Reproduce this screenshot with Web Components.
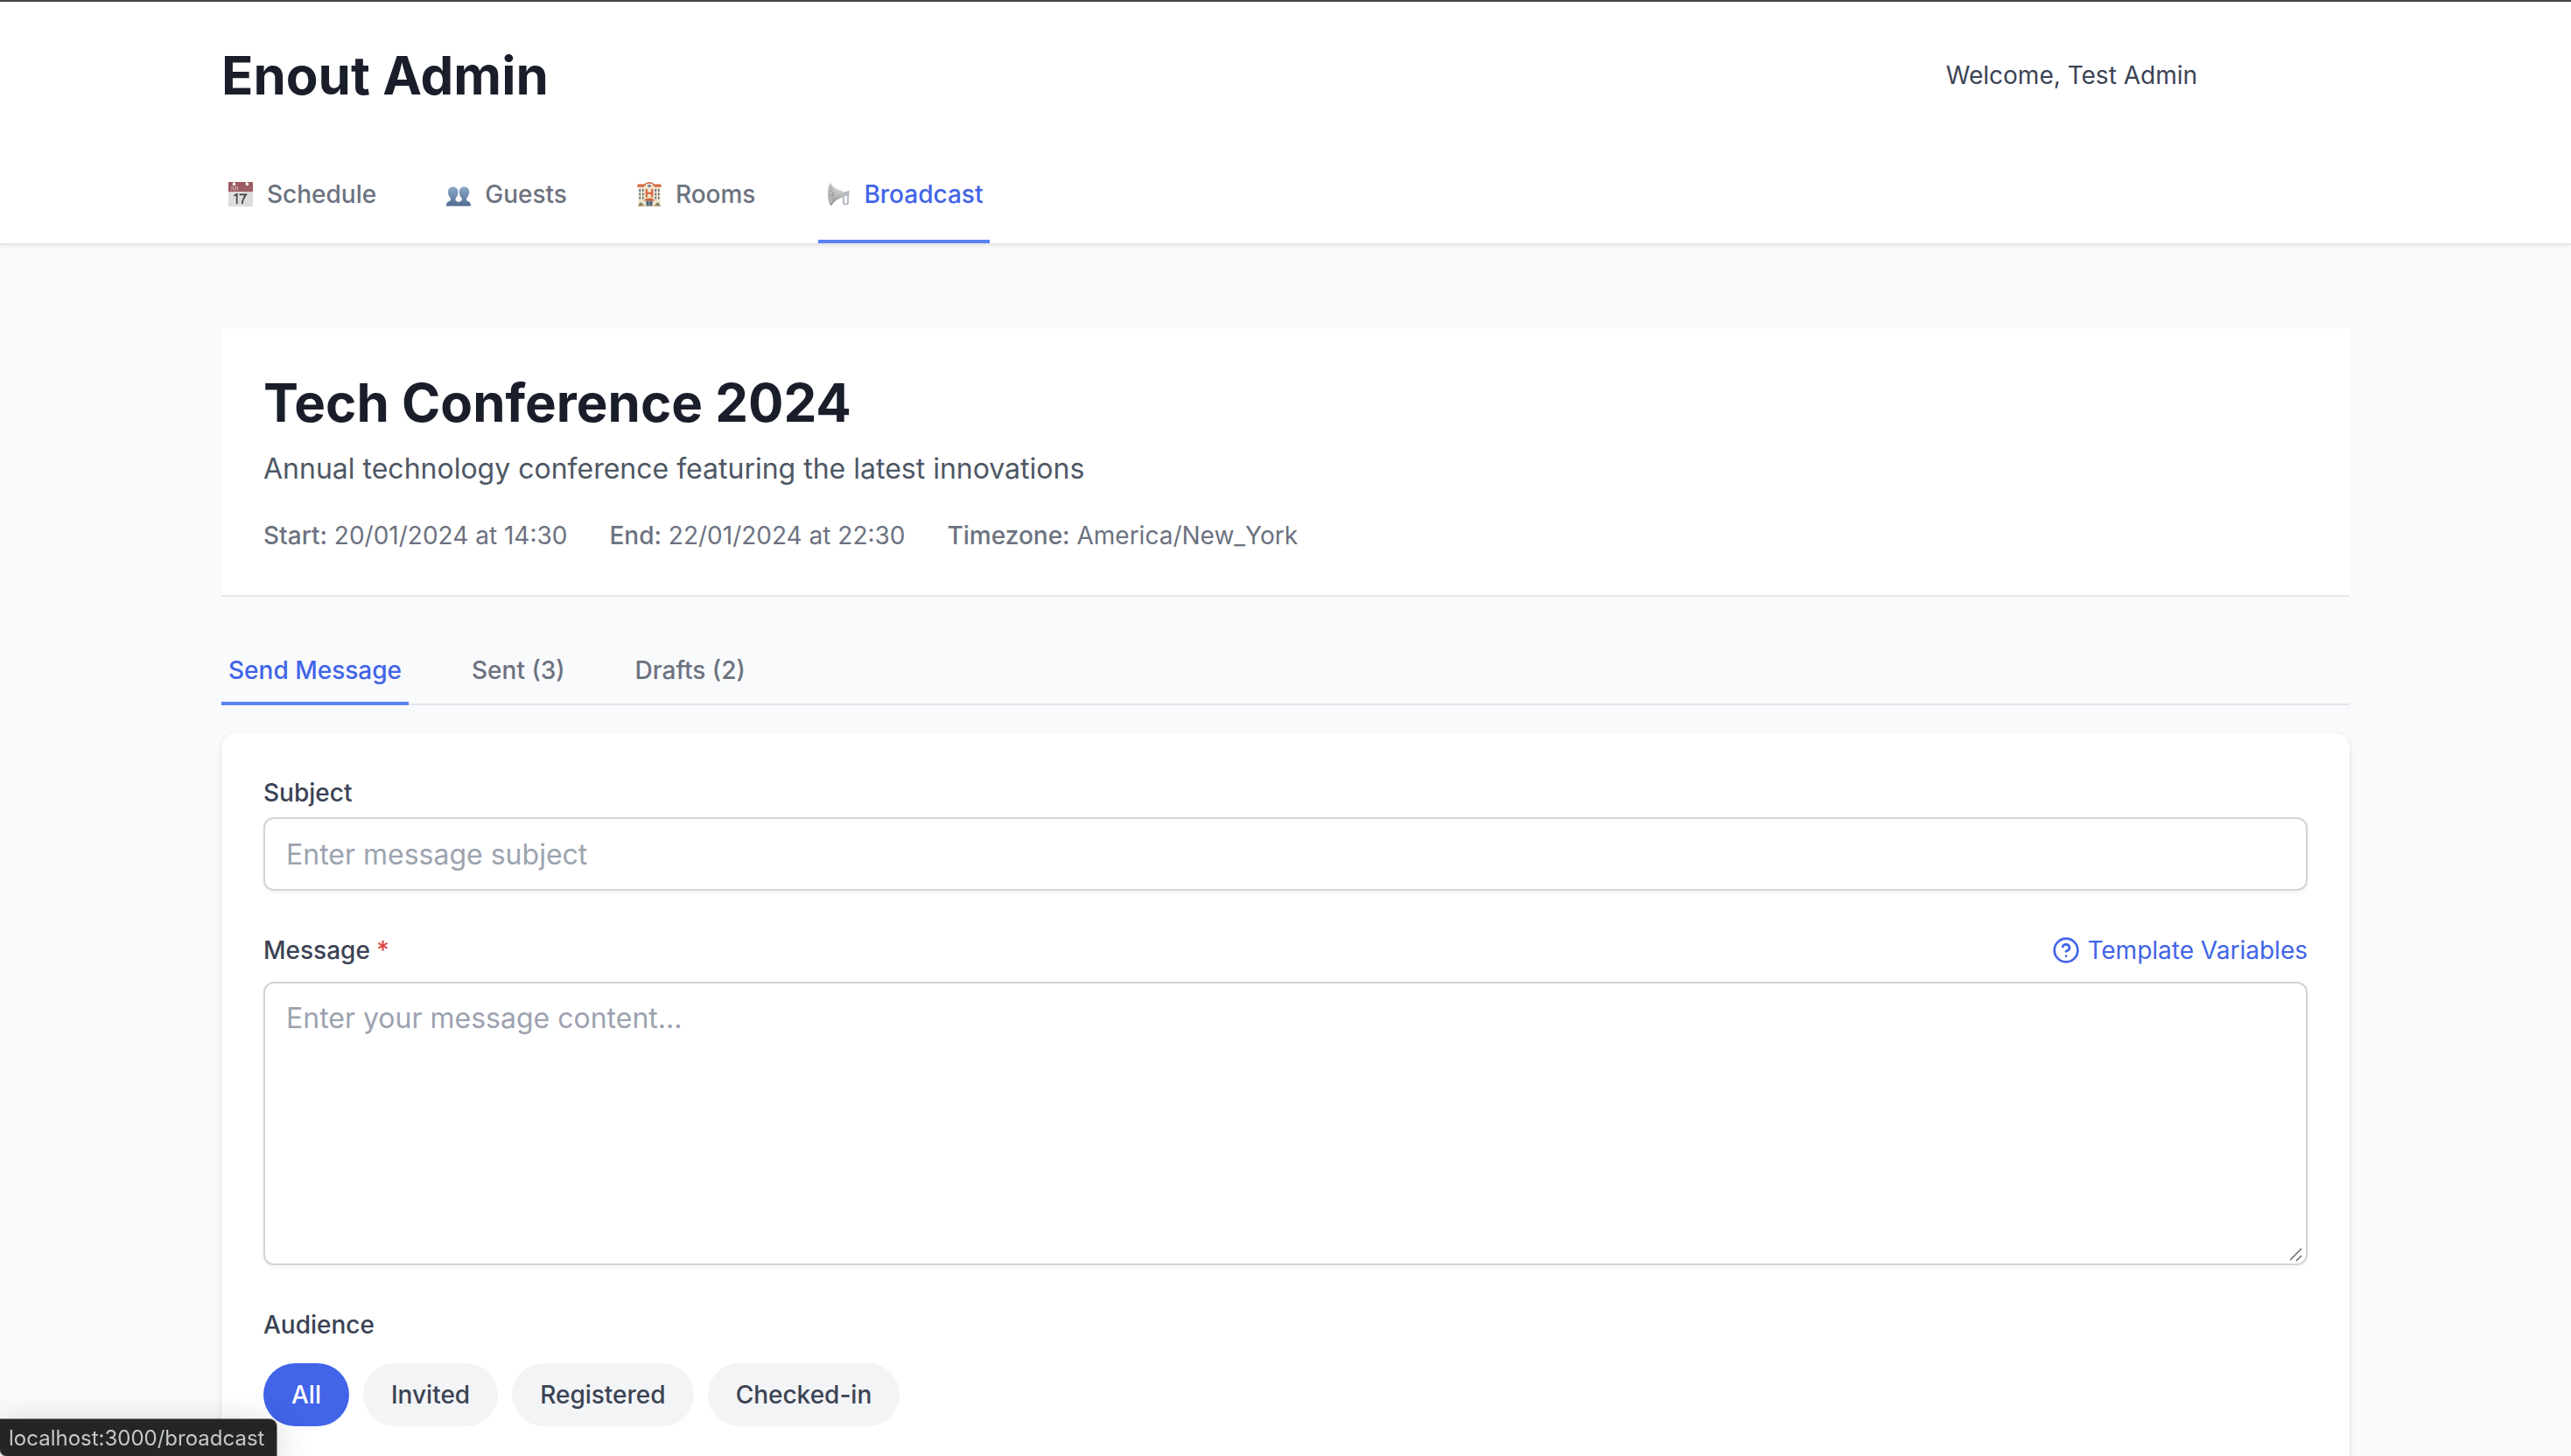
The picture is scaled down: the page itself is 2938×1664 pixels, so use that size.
<!DOCTYPE html>
<html lang="en">
<head>
<meta charset="utf-8">
<title>Enout Admin</title>
<style>
  :root {
    --ink: #1a1e2b;
    --text: #3b4354;
    --muted: #6c7280;
    --line: #e3e6ea;
    --field-line: #d1d5db;
    --blue: #4164e8;
    --blue-line: #5982f4;
    --page: #f9fafc;
  }
  * { box-sizing: border-box; }
  body {
    margin: 0;
    height: 100vh;
    overflow: hidden;
    background: var(--page);
    color: var(--text);
    font: 400 28px/40px Inter, "Liberation Sans", sans-serif;
    font-optical-sizing: none;
    -webkit-font-smoothing: antialiased;
  }
</style>
</head>
<body>
<admin-app></admin-app>

<template id="t-app">
  <style>
    :host { display: block; border-top: 2px solid #464547; }
    main { display: block; box-sizing: border-box; max-width: 2560px; margin: 0 auto; padding: 96px 64px; }
    page-tabs { margin-top: 48px; }
    message-form { margin-top: 32px; }
  </style>
  <admin-header>
    <span slot="brand">Enout Admin</span>
    <span slot="user">Welcome, Test Admin</span>
    <nav-link href="#schedule" icon="calendar">Schedule</nav-link>
    <nav-link href="#guests" icon="guests">Guests</nav-link>
    <nav-link href="#rooms" icon="hotel">Rooms</nav-link>
    <nav-link href="#broadcast" icon="horn" active>Broadcast</nav-link>
  </admin-header>
  <main>
    <event-card>
      <span slot="title">Tech Conference 2024</span>
      <span slot="about">Annual technology conference featuring the latest innovations</span>
      <event-fact label="Start:">20/01/2024 at 14:30</event-fact>
      <event-fact label="End:">22/01/2024 at 22:30</event-fact>
      <event-fact label="Timezone:">America/New_York</event-fact>
    </event-card>
    <page-tabs>
      <tab-button active>Send Message</tab-button>
      <tab-button>Sent (3)</tab-button>
      <tab-button>Drafts (2)</tab-button>
    </page-tabs>
    <message-form></message-form>
  </main>
  <status-bubble>localhost:3000/broadcast</status-bubble>
</template>

<template id="t-header">
  <style>
    :host { display: block; position: relative; background: #fff; border-bottom: 2px solid var(--line); box-shadow: 0 2px 4px rgba(0,0,0,.05); }
    .inner { box-sizing: border-box; max-width: 2560px; margin: 0 auto; padding: 0 64px; }
    .top { display: flex; align-items: center; justify-content: space-between; padding: 48px 174px 48px 0; }
    h1 { margin: 0; font-size: 60px; line-height: 72px; font-weight: 700; color: var(--ink); }
    nav { display: flex; gap: 64px; }
  </style>
  <div class="inner">
    <div class="top"><h1><slot name="brand"></slot></h1><slot name="user"></slot></div>
    <nav><slot></slot></nav>
  </div>
</template>

<template id="t-nav-link">
  <style>
    :host { display: block; }
    a { display: flex; align-items: center; gap: 16px; padding: 32px 8px; border-bottom: 4px solid transparent; font-weight: 500; color: var(--muted); text-decoration: none; }
    :host([active]) a { color: var(--blue); border-color: var(--blue-line); }
    svg { display: block; width: 28px; height: 28px; }
  </style>
  <a><span class="icon"></span><slot></slot></a>
</template>

<template id="i-calendar">
  <svg viewBox="0 0 28 28" aria-hidden="true">
    <path fill="#dcdcdc" d="M0 10h28v18H0z"/>
    <path fill="#9c5b60" d="M0 0h28v11H0z"/>
    <path fill="none" stroke="#d3b2b5" stroke-width="1" d="M4 5v3.500q0 1-1.500 1M6 5v3q0 1.500 1.200 1.500T8.500 8V5M10.500 5v4.500"/>
    <path fill="none" stroke="#a56a6f" stroke-dasharray="1 1" d="M15 6.500h11M15 8.500h11"/>
    <circle cx="6.500" cy="2.500" r="1.700" fill="#fff"/><circle cx="21.500" cy="2.500" r="1.700" fill="#fff"/>
    <path stroke="#fff" stroke-width="1.500" d="M6.500 0v2M20 0l1.500 2"/>
    <path fill="none" stroke="#404040" stroke-width="1.700" d="M6.500 15.800l3.200-1.900V25M12.500 14.300h7.700q-4 5-4.500 10.700"/>
  </svg>
</template>

<template id="i-guests">
  <svg viewBox="0 0 28 28" aria-hidden="true">
    <defs><linearGradient id="g" x1="0" y1="0" x2="0" y2="1"><stop offset="0" stop-color="#8ba9c8"/><stop offset="1" stop-color="#526c94"/></linearGradient></defs>
    <path fill="url(#g)" d="M7.500 5.500C4 5.500 2 8 2 11.500c0 3 1 5 2.500 6.500.8 1 .6 2.600 0 3.300C3 22.600 0 22 0 27.500h28c0-5.500-3-4.900-4.500-6.200-.6-.7-.8-2.300 0-3.300 1.500-1.500 2.700-3.500 2.700-6.500 0-3.500-2-6-5.700-6-3.500 0-5.700 2.500-5.700 6 0 3 1 5 2.500 6.500.8 1 .6 2.600 0 3.300-.8.800-2 1-3.300 1.800-1.200-.8-2.300-1-3-1.800-.6-.7-.8-2.300 0-3.300 1.500-1.500 2.500-3.500 2.500-6.500 0-3.500-2.500-6-6-6z"/>
  </svg>
</template>

<template id="i-hotel">
  <svg viewBox="0 0 28 28" aria-hidden="true">
    <path fill="#efe2c8" d="M1.500 6H9V4q5-5 10 0v2h7.500v21.500h-25z"/>
    <path fill="none" stroke="#d4693f" stroke-width="1.400" d="M8.500 5q.5-4 5.500-4.200 5 .2 5.500 4.200"/>
    <path fill="#d4693f" d="M1 2.500h7.500L8 5.800H0zM19.500 2.500H27l1 3.300h-8z"/>
    <circle cx="14" cy="4.500" r="1.600" fill="#5d7896"/>
    <path fill="#4f6885" d="M2.500 8H4v3H2.500zM6 8h1.500v3H6zM2.500 12.500H4v3H2.500zm3.500 0h1.500v3H6zM2.500 17H4v2.500H2.500zM6 17h1.500v2.500H6zM20.500 8H22v3h-1.500zM24 8h1.500v3H24zM20.500 12.500H22v3h-1.500zm3.500 0h1.500v3H24zM20.500 17H22v2.500h-1.500zm3.500 0h1.500v2.500H24z"/>
    <path fill="none" stroke="#d85f38" stroke-width="2" d="M10.800 8v9.500M17.200 8v9.500M10.800 12.700h6.400"/>
    <path fill="#cf6038" d="M8 21.500q1-3 6-3t6 3z"/>
    <path fill="#4c6079" d="M10.500 21.500h7v6h-7z"/><path stroke="#dccfb8" stroke-width=".8" d="M14 21.500v6"/>
    <path fill="#74885f" d="M2 27q.3-3.500 2.500-3.500T7 27zM21 27q.3-3.500 2.500-3.500T26 27z"/>
    <path fill="#b98e70" d="M1 26.500h8v1.300H1zm18 0h8v1.300h-8z"/>
  </svg>
</template>

<template id="i-horn">
  <svg viewBox="0 0 28 28" aria-hidden="true">
    <defs><linearGradient id="h" x1="0" y1="0" x2="0" y2="1"><stop offset="0" stop-color="#d2d2d2"/><stop offset=".45" stop-color="#c4c4c4"/><stop offset="1" stop-color="#8a8a8a"/></linearGradient></defs>
    <path fill="none" stroke="#a4abb5" stroke-width="1.600" d="M21 17v7.500q2.500 2 5 0V12"/>
    <path fill="#b4bac2" d="M20 12l5.500-1.500L27.500 9.500v5.500L20 17z"/>
    <path fill="url(#h)" d="M5.500 1Q10 8 20.500 11v6.500Q11 20 7 27z"/>
    <path fill="url(#h)" d="M5.500 1C3.500 3 3 8 3 14s1.500 11.500 4 13c3-3 4-8 4-13S8.500 3.500 5.500 1z"/>
    <ellipse cx="6.500" cy="14" rx="2.800" ry="10.500" fill="#b4b4b4"/>
    <circle cx="8" cy="13.500" r="2.300" fill="#919191"/><circle cx="7.500" cy="13" r="1.200" fill="#dcdcdc"/>
  </svg>
</template>

<template id="t-event">
  <style>
    :host { display: block; padding: 48px; background: #fff; border-bottom: 2px solid var(--line); }
    h2 { margin: 0; font-size: 60px; line-height: 72px; font-weight: 700; color: var(--ink); }
    p { margin: 16px 0 0; font-size: 32px; line-height: 48px; color: #4e5765; }
    .facts { display: flex; flex-wrap: wrap; gap: 48px; margin-top: 32px; color: var(--muted); }
  </style>
  <h2><slot name="title"></slot></h2>
  <p><slot name="about"></slot></p>
  <div class="facts"><slot></slot></div>
</template>

<template id="t-fact">
  <style>:host { display: block; } b { font-weight: 500; }</style>
  <b></b> <slot></slot>
</template>

<template id="t-tabs">
  <style>
    :host { display: block; border-bottom: 2px solid var(--line); }
    div { display: flex; gap: 64px; margin-bottom: -2px; }
  </style>
  <div role="tablist"><slot></slot></div>
</template>

<template id="t-tab">
  <style>
    :host { display: block; }
    button { display: block; margin: 0; padding: 16px 8px; border: 0; border-bottom: 4px solid transparent; background: none; font: inherit; font-weight: 500; font-optical-sizing: inherit; color: var(--muted); cursor: pointer; }
    :host([active]) button { color: var(--blue); border-color: var(--blue-line); }
  </style>
  <button type="button" role="tab"><slot></slot></button>
</template>

<template id="t-form">
  <style>
    :host { display: block; padding: 48px; background: #fff; border-radius: 16px; box-shadow: 0 2px 6px rgba(0,0,0,.1), 0 2px 4px -2px rgba(0,0,0,.1); }
    form { display: flex; flex-direction: column; gap: 48px; }
    label, .label { display: block; font-weight: 500; }
    input, textarea { display: block; box-sizing: border-box; width: 100%; margin: 0; padding: 16px 24px; border: 2px solid var(--field-line); border-radius: 12px; background: #fff; box-shadow: 0 2px 4px rgba(0,0,0,.05); font: inherit; font-optical-sizing: inherit; font-size: 32px; line-height: 48px; color: var(--ink); outline: none; }
    input { height: 84px; margin-top: 8px; }
    textarea { height: 324px; margin-top: 16px; resize: none; }
    ::placeholder { color: #9ca3af; opacity: 1; }
    .row { display: flex; align-items: center; justify-content: space-between; }
    .req { color: #dc4446; }
    .help { display: flex; align-items: center; gap: 8px; color: var(--blue); padding: 0; border: 0; background: none; font: inherit; font-optical-sizing: inherit; cursor: pointer; }
    .help svg { width: 32px; height: 32px; }
    .area { position: relative; }
    .grip { position: absolute; right: 4px; bottom: 2px; width: 16px; height: 18px; }
    .pills { display: flex; flex-wrap: wrap; gap: 16px; margin-top: 24px; }
  </style>
  <form>
    <div><label for="subject">Subject</label><input id="subject" type="text" placeholder="Enter message subject"></div>
    <div>
      <div class="row">
        <label for="message">Message <span class="req">*</span></label>
        <button class="help" type="button">
          <svg viewBox="0 0 24 24" fill="none" stroke="currentColor" stroke-width="2" stroke-linecap="round" stroke-linejoin="round" aria-hidden="true"><circle cx="12" cy="12" r="10"/><path d="M9.090 9a3 3 0 0 1 5.830 1c0 2-3 3-3 3M12 17h.01"/></svg>
          <span>Template Variables</span>
        </button>
      </div>
      <div class="area">
        <textarea id="message" placeholder="Enter your message content..."></textarea>
        <svg class="grip" viewBox="0 0 16 18" aria-hidden="true"><path d="M-1 15L13 1M7 15l6-6" stroke="#666" stroke-width="1.500" fill="none"/></svg>
      </div>
    </div>
    <div role="group" aria-labelledby="aud">
      <div class="label" id="aud">Audience</div>
      <div class="pills">
        <pill-button active>All</pill-button>
        <pill-button>Invited</pill-button>
        <pill-button>Registered</pill-button>
        <pill-button>Checked-in</pill-button>
      </div>
    </div>
  </form>
</template>

<template id="t-pill">
  <style>
    :host { display: block; }
    button { display: block; margin: 0; padding: 16px 32px; border: 0; border-radius: 36px; background: #f3f4f6; font: inherit; font-weight: 500; font-optical-sizing: inherit; color: var(--text); cursor: pointer; }
    :host([active]) button { background: var(--blue); color: #fff; }
  </style>
  <button type="button"><slot></slot></button>
</template>

<template id="t-status">
  <style>
    :host { position: fixed; left: 0; bottom: 0; padding: 6px 14px 4px 10px; background: #232526; color: #c6c8c8; font-size: 24px; line-height: 32px; border-radius: 0 8px 0 8px; box-shadow: 0 0 0 1px rgba(0,0,0,.4), 0 8px 40px rgba(0,0,0,.2); }
  </style>
  <slot></slot>
</template>

<script>
  const stamp = id => document.getElementById(id).content.cloneNode(true);
  const define = (name, id, setup) => customElements.define(name, class extends HTMLElement {
    constructor() {
      super();
      this.attachShadow({ mode: "open" }).append(stamp(id));
    }
    connectedCallback() {
      if (setup) setup(this, this.shadowRoot);
    }
  });

  define("nav-link", "t-nav-link", (el, root) => {
    const link = root.querySelector("a");
    link.href = el.getAttribute("href");
    if (el.hasAttribute("active")) link.setAttribute("aria-current", "page");
    root.querySelector(".icon").replaceChildren(stamp("i-" + el.getAttribute("icon")));
  });
  define("event-fact", "t-fact", (el, root) => {
    root.querySelector("b").textContent = el.getAttribute("label");
  });
  define("tab-button", "t-tab", (el, root) => {
    root.querySelector("button").setAttribute("aria-selected", el.hasAttribute("active"));
  });
  define("pill-button", "t-pill", (el, root) => {
    root.querySelector("button").setAttribute("aria-pressed", el.hasAttribute("active"));
  });
  define("admin-header", "t-header");
  define("event-card", "t-event");
  define("page-tabs", "t-tabs");
  define("message-form", "t-form");
  define("status-bubble", "t-status");
  define("admin-app", "t-app");
</script>
</body>
</html>
